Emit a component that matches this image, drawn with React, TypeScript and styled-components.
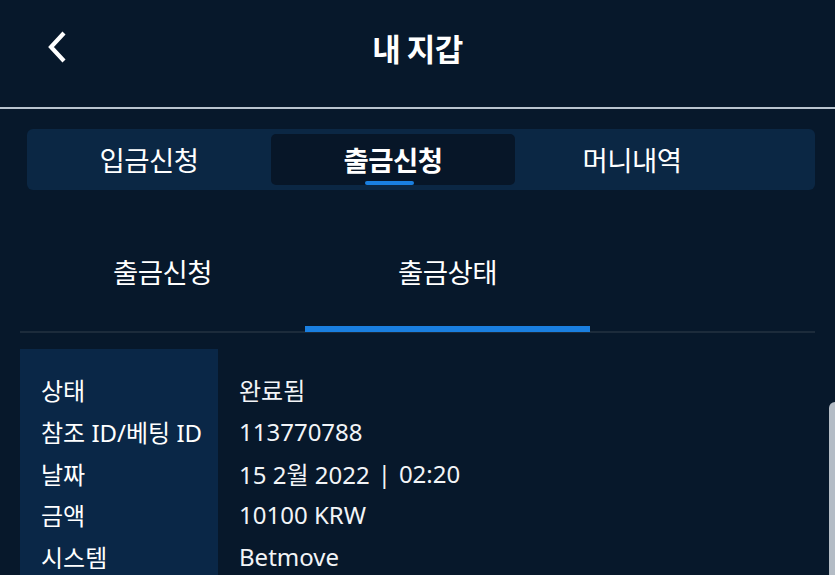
import React, { useState } from 'react';
import styled, { createGlobalStyle } from 'styled-components';

const GlobalStyle = createGlobalStyle`
  html, body {
    margin: 0;
    padding: 0;
    background: #07182b;
  }
  body {
    font-family: "Noto Sans", "Noto Sans CJK KR", sans-serif;
    color: #ffffff;
  }
`;

const Page = styled.div`
  position: relative;
  width: 835px;
  height: 575px;
  overflow: hidden;
  background: #07182b;
`;

const Header = styled.header`
  height: 107px;
  display: flex;
  align-items: center;
  justify-content: center;
  position: relative;
  border-bottom: 2px solid #b9c4cf;
`;

const BackButton = styled.button`
  position: absolute;
  left: 40px;
  top: 28px;
  width: 34px;
  height: 38px;
  padding: 0;
  border: none;
  background: transparent;
  cursor: pointer;
  display: flex;
  align-items: center;
  justify-content: center;
`;

const Title = styled.h1`
  margin: 0;
  margin-top: -13px;
  font-family: "Noto Sans CJK KR", sans-serif;
  font-size: 31px;
  font-weight: 700;
  letter-spacing: -0.5px;
`;

const TabBar = styled.div`
  margin: 20px 20px 0 27px;
  height: 61px;
  box-sizing: border-box;
  padding: 5px;
  border-radius: 6px;
  background: #0b2744;
  display: grid;
  grid-template-columns: 234px 244px 224px;
  column-gap: 5px;
`;

const TopTab = styled.button<{ $active?: boolean }>`
  position: relative;
  border: none;
  border-radius: 5px;
  background: ${(p) => (p.$active ? '#071628' : 'transparent')};
  color: #ffffff;
  font-family: "Noto Sans CJK KR", sans-serif;
  font-size: 27.5px;
  font-weight: ${(p) => (p.$active ? 700 : 400)};
  letter-spacing: -0.5px;
  padding: 1px 0 3px;
  cursor: pointer;

  &::after {
    content: '';
    display: ${(p) => (p.$active ? 'block' : 'none')};
    position: absolute;
    left: 50%;
    bottom: 0;
    width: 49px;
    height: 4px;
    margin-left: -28px;
    border-radius: 2px;
    background: #1a7fe0;
  }
`;

const SubTabs = styled.div`
  margin: 0 20px;
  display: flex;
  height: 141px;
  border-bottom: 2px solid #1c2b3b;
`;

const SubTab = styled.button<{ $active?: boolean }>`
  position: relative;
  width: 285px;
  border: none;
  background: transparent;
  color: #ffffff;
  font-family: "Noto Sans CJK KR", sans-serif;
  font-size: 27.5px;
  font-weight: 400;
  letter-spacing: -0.5px;
  padding: 21px 0 0;
  cursor: pointer;

  &::after {
    content: '';
    display: ${(p) => (p.$active ? 'block' : 'none')};
    position: absolute;
    left: 0;
    right: 0;
    bottom: -1px;
    height: 6px;
    background: #1a7fe0;
  }
`;

const Details = styled.div`
  margin: 16px 20px 0;
  display: grid;
  grid-template-columns: 198px 1fr;
`;

const LabelCol = styled.div`
  background: #0a2747;
  padding: 20px 0 0 21px;
  min-height: 260px;
`;

const ValueCol = styled.div`
  padding: 20px 0 0 21px;
`;

const Cell = styled.div<{ $value?: boolean }>`
  height: 41.7px;
  display: flex;
  align-items: center;
  font-family: "Noto Sans", "Noto Sans CJK KR", sans-serif;
  font-size: 24px;
  font-weight: 400;
  color: ${(p) => (p.$value ? '#f2f4f7' : '#ffffff')};
  white-space: nowrap;
`;

const Pipe = styled.span`
  margin: 0 8px;
`;

const ScrollEdge = styled.div`
  position: absolute;
  right: 0;
  top: 402px;
  width: 6px;
  height: 200px;
  border-top-left-radius: 6px;
  background: #b4bcc5;
`;

const rows: { label: string; value: React.ReactNode }[] = [
  { label: '상태', value: '완료됨' },
  { label: '참조 ID/베팅 ID', value: '113770788' },
  {
    label: '날짜',
    value: (
      <>
        15 2월 2022<Pipe>|</Pipe>02:20
      </>
    ),
  },
  { label: '금액', value: '10100 KRW' },
  { label: '시스템', value: 'Betmove' },
];

const App = () => {
  const [topTab, setTopTab] = useState(1);
  const [subTab, setSubTab] = useState(1);
  const topTabs = ['입금신청', '출금신청', '머니내역'];
  const subTabs = ['출금신청', '출금상태'];

  return (
    <Page>
      <GlobalStyle />
      <Header>
        <BackButton aria-label="back">
          <svg width="22" height="32" viewBox="0 0 22 32" fill="none">
            <path d="M18 2 L5 16 L18 30" stroke="#ffffff" strokeWidth="4.2" strokeLinecap="butt" strokeLinejoin="miter" />
          </svg>
        </BackButton>
        <Title>내 지갑</Title>
      </Header>

      <TabBar>
        {topTabs.map((t, i) => (
          <TopTab key={t} $active={topTab === i} onClick={() => setTopTab(i)}>
            {t}
          </TopTab>
        ))}
      </TabBar>

      <SubTabs>
        {subTabs.map((t, i) => (
          <SubTab key={t} $active={subTab === i} onClick={() => setSubTab(i)}>
            {t}
          </SubTab>
        ))}
      </SubTabs>

      <Details>
        <LabelCol>
          {rows.map((r) => (
            <Cell key={r.label}>{r.label}</Cell>
          ))}
        </LabelCol>
        <ValueCol>
          {rows.map((r) => (
            <Cell key={r.label} $value>
              {r.value}
            </Cell>
          ))}
        </ValueCol>
      </Details>

      <ScrollEdge />
    </Page>
  );
};

export default App;
